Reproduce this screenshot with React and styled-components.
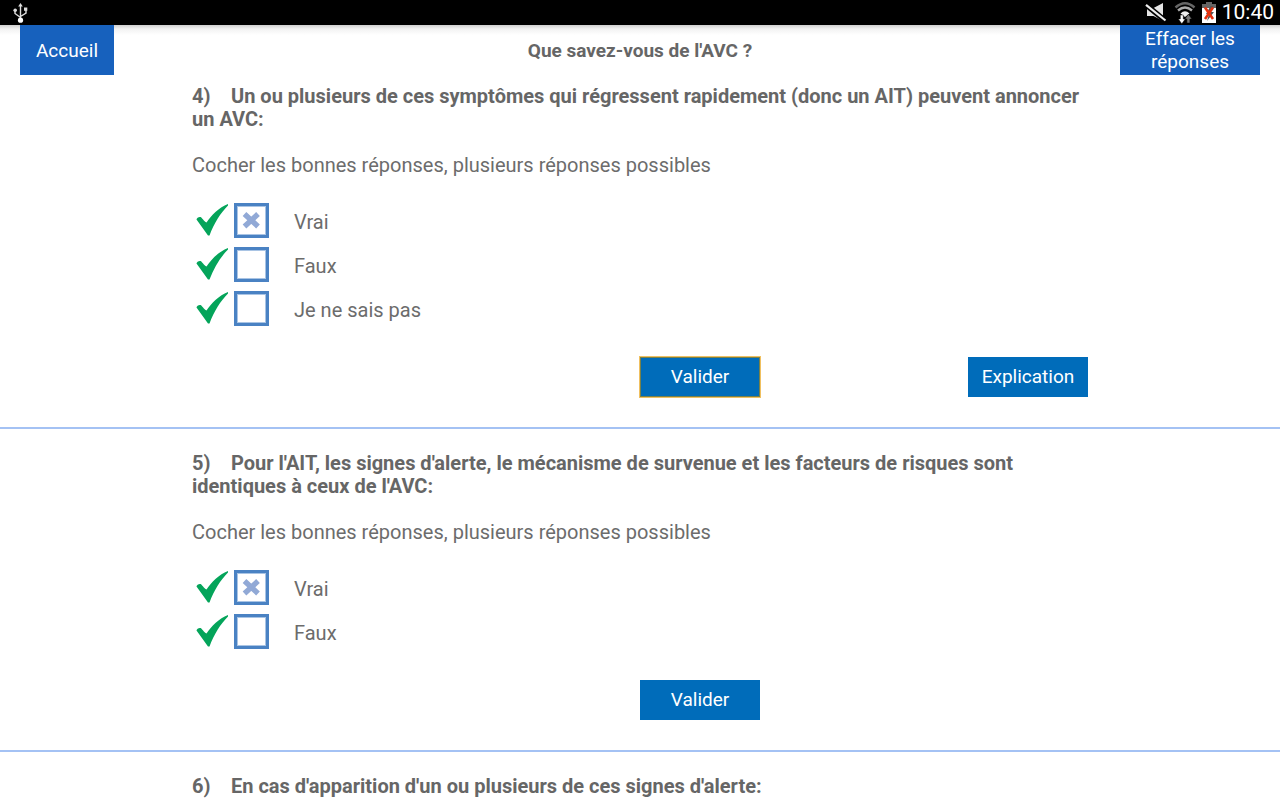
import React, { useState } from "react";
import styled, { createGlobalStyle } from "styled-components";

const GlobalStyle = createGlobalStyle`
  *, *::before, *::after { box-sizing: border-box; }
  body {
    margin: 0;
    background: #fff;
    color: #666;
    font: 20px/23px Roboto, "Noto Sans", sans-serif;
  }
`;

const Screen = styled.div`
  display: flex;
  flex-direction: column;
  height: 100vh;
  overflow: hidden;
`;

const StatusBar = styled.div`
  flex: none;
  display: flex;
  align-items: center;
  justify-content: space-between;
  height: 25px;
  padding: 0 6px 0 12px;
  background: #000;
  color: #fff;
  font-size: 21px;
`;

const StatusIcons = styled.div`
  display: flex;
  align-items: center;
`;

const Glyph = styled.svg`
  display: block;
  flex: none;
`;

const Clock = styled.time`
  margin-left: 6px;
`;

const Header = styled.header`
  flex: none;
  display: grid;
  grid-template-columns: 1fr auto 1fr;
  align-items: center;
  height: 50px;
  padding: 0 20px;
  background: linear-gradient(#d0d0d0, #f2f2f2 4px, #fff 10px);
`;

const Title = styled.h1`
  margin: 0;
  font-size: 19px;
  font-weight: 700;
`;

const Button = styled.button`
  border: 0;
  border-radius: 0;
  color: #fff;
  font: inherit;
  font-size: 19px;
  cursor: pointer;
`;

const HeaderButton = styled(Button)`
  justify-self: ${(p) => p.$side};
  width: ${(p) => p.$width}px;
  height: 50px;
  padding: 0 15px;
  background: #1761bd;
`;

const ActionButton = styled(Button)`
  width: 120px;
  height: 40px;
  padding: 0 0 2px;
  background: #006cba;
  outline: ${(p) => (p.$active ? "1px solid #f0c060" : "none")};
  box-shadow: ${(p) => (p.$active ? "inset 0 0 0 1px #77814a" : "none")};
`;

const Quiz = styled.main`
  flex: 1;
  min-height: 0;
  overflow: hidden;
`;

const Question = styled.section`
  padding: ${(p) => (p.$first ? 10 : 23)}px 15% 30px;
  border-bottom: 2px solid #a4c2f4;
`;

const Prompt = styled.h2`
  margin: 0 0 23px;
  font-size: 20px;
  font-weight: 700;
`;

const Num = styled.span`
  display: inline-block;
  width: 39px;
`;

const Hint = styled.p`
  margin: 0 0 26px;
  color: #6c6c6c;
`;

const Choices = styled.div`
  display: flex;
  flex-direction: column;
  gap: 9px;
`;

const Choice = styled.label`
  display: flex;
  align-items: center;
  height: 35px;
  padding-left: 4px;
`;

const BoxWrap = styled.span`
  display: grid;
  place-items: center;
  margin: 0 25px 0 6px;

  > * { grid-area: 1 / 1; }
`;

const Box = styled.input`
  appearance: none;
  width: 35px;
  height: 35px;
  margin: 0;
  border: 3px solid #4a82c3;
  box-shadow: inset 0 0 0 1px #a9c4e4;
  background: #fff;
`;

const Cross = styled(Glyph)`
  z-index: 1;
  pointer-events: none;
`;

const ChoiceText = styled.span`
  padding-top: 4px;
  color: #6c6c6c;
`;

const Actions = styled.div`
  display: flex;
  justify-content: space-between;
  margin-top: 31px;
  padding-left: 50%;
`;

function UsbIcon() {
  return (
    <Glyph width="16" height="20" viewBox="0 0 16 20" fill="none" stroke="#ddd" strokeWidth="1.4">
      <path d="M8.5 2v14M3 7v3.5l5.5 4M14 6v4l-5.5 3.5" />
      <path d="M8.5 0l2.3 3.4H6.2z" fill="#ddd" stroke="none" />
      <circle cx="3.2" cy="7.2" r="1.8" fill="#ddd" stroke="none" />
      <path d="M12 4.5h3.3v3.3H12z" fill="#ddd" stroke="none" />
      <circle cx="8.5" cy="17.2" r="2.6" fill="#fff" stroke="none" />
    </Glyph>
  );
}

function MuteIcon() {
  return (
    <Glyph width="22" height="20" viewBox="0 0 22 20">
      <path d="M2 5h6.500L18 0v18l-9.500-5H2z" fill="#e4e4e4" />
      <path d="M0 1L20 17.500" stroke="#000" strokeWidth="5.500" />
      <path d="M1 1.800L20.500 17.500" stroke="#eee" strokeWidth="2.200" />
    </Glyph>
  );
}

function WifiIcon() {
  return (
    <Glyph width="24" height="24" viewBox="0 0 24 24" fill="none">
      <path d="M2.500 6.500Q12-2 21.500 6.500" stroke="#666" strokeWidth="2.400" />
      <path d="M5 9.500Q12 3.500 19 9.500" stroke="#aaa" strokeWidth="2.400" />
      <path d="M7.500 12.500Q12 8 16.500 12.500L12 16z" fill="#eee" />
      <path d="M7.300 14h3v4h2l-3.500 4.800L5.300 18h2z" fill="#fff" stroke="#000" strokeWidth=".5" />
      <path d="M13.900 22v-4h-2l3.500-4.800L18.900 18h-2v4z" fill="#777" stroke="#000" strokeWidth=".5" />
    </Glyph>
  );
}

function BatteryIcon() {
  return (
    <Glyph width="14" height="21" viewBox="0 0 14 21">
      <path d="M4 0h6v2h4v5H0V2h4z" fill="#666" />
      <path d="M0 6h14v15H0z" fill="#fff" />
      <path d="M8.500 4L4 12h3l-2 7 7-9H8.500l3-6z" fill="#555" />
      <path d="M3 5.500l8 11.500M11 5.500L3 17" stroke="#e5310e" strokeWidth="2.600" />
    </Glyph>
  );
}

function Tick() {
  return (
    <Glyph width="32" height="33" viewBox="0 0 32 33" aria-hidden="true">
      <path
        d="M.5 15.500C.5 14 3 12.500 4.500 13C6 13.500 8 17.500 10.500 18.500C15.500 11 23 3.500 32 0V1.500C24.500 9 18 19.500 13.500 31.500H12Z"
        fill="#04a45a"
      />
    </Glyph>
  );
}

function Option({ text, defaultChecked }) {
  const [checked, setChecked] = useState(defaultChecked);
  return (
    <Choice>
      <Tick />
      <BoxWrap>
        <Box type="checkbox" checked={checked} onChange={(e) => setChecked(e.target.checked)} />
        {checked && (
          <Cross width="19" height="19" viewBox="0 0 19 19" aria-hidden="true">
            <path d="M2.500 3L16 15.500M16 3L2.500 15.500" stroke="#91a9d6" strokeWidth="5.400" />
          </Cross>
        )}
      </BoxWrap>
      <ChoiceText>{text}</ChoiceText>
    </Choice>
  );
}

const questions = [
  {
    n: 4,
    text: "Un ou plusieurs de ces symptômes qui régressent rapidement (donc un AIT) peuvent annoncer un AVC:",
    choices: ["Vrai", "Faux", "Je ne sais pas"],
    validated: true,
  },
  {
    n: 5,
    text: "Pour l'AIT, les signes d'alerte, le mécanisme de survenue et les facteurs de risques sont identiques à ceux de l'AVC:",
    choices: ["Vrai", "Faux"],
  },
  { n: 6, text: "En cas d'apparition d'un ou plusieurs de ces signes d'alerte:" },
];

export default function App() {
  return (
    <Screen>
      <GlobalStyle />
      <StatusBar>
        <UsbIcon />
        <StatusIcons>
          <MuteIcon />
          <Glyph width="6" height="1" />
          <WifiIcon />
          <Glyph width="5" height="1" />
          <BatteryIcon />
          <Clock>10:40</Clock>
        </StatusIcons>
      </StatusBar>
      <Header>
        <HeaderButton type="button" $side="start" $width={94}>Accueil</HeaderButton>
        <Title>Que savez-vous de l'AVC ?</Title>
        <HeaderButton type="button" $side="end" $width={140}>Effacer les réponses</HeaderButton>
      </Header>
      <Quiz>
        {questions.map((q, i) => (
          <Question key={q.n} $first={i === 0}>
            <Prompt><Num>{`${q.n})`}</Num>{q.text}</Prompt>
            {q.choices && (
              <>
                <Hint>Cocher les bonnes réponses, plusieurs réponses possibles</Hint>
                <Choices>
                  {q.choices.map((c, j) => (
                    <Option key={c} text={c} defaultChecked={j === 0} />
                  ))}
                </Choices>
                <Actions>
                  <ActionButton type="button" $active={q.validated}>Valider</ActionButton>
                  {q.validated && <ActionButton type="button">Explication</ActionButton>}
                </Actions>
              </>
            )}
          </Question>
        ))}
      </Quiz>
    </Screen>
  );
}
